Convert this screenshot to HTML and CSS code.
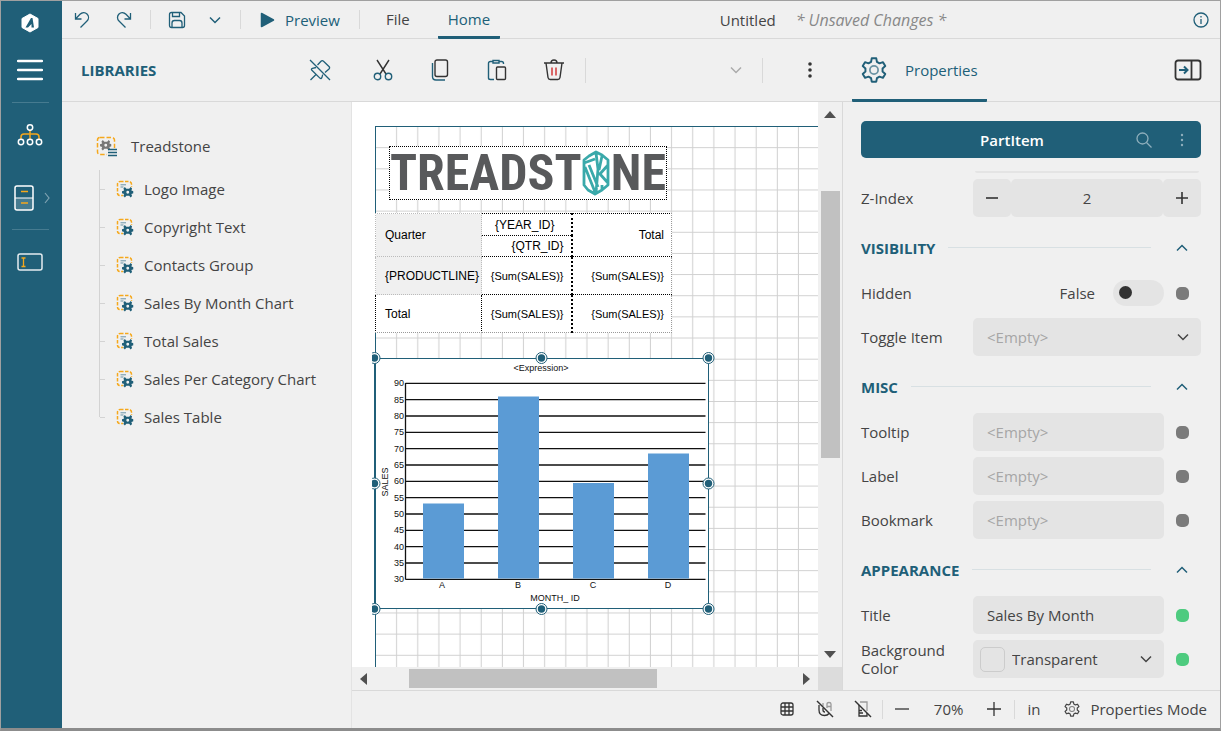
FILE: index.html
```html
<!DOCTYPE html>
<html lang="en">
<head>
    <meta charset="UTF-8">
    <meta name="viewport" content="width=device-width, initial-scale=1.0">
    <title>Untitled - Report Designer</title>
    <link rel="stylesheet" href="styles.css">
</head>
<body>
    <!-- Shared icons -->
    <svg class="sprite" width="0" height="0" aria-hidden="true">
        <symbol id="gear" viewBox="0 0 24 24">
            <path d="M9.3 4.5 9.9 1.2h4.2l.6 3.3 2.4 1.4 3.2-1.1 2.1 3.6-2.5 2.2v2.8l2.5 2.2-2.1 3.6-3.2-1.1-2.4 1.4-.6 3.3H9.9l-.6-3.3-2.4-1.4-3.2 1.1-2.1-3.6 2.5-2.2v-2.8L1.6 8.4l2.1-3.6 3.2 1.1z" fill="none" stroke="currentColor" stroke-width="1.8" stroke-linejoin="round"/>
            <circle cx="12" cy="12" r="3.8" fill="none" stroke="currentColor" stroke-width="1.6" opacity=".65"/>
        </symbol>
        <symbol id="cog" viewBox="0 0 24 24">
            <path fill="currentColor" fill-rule="evenodd" d="M9 4.500 6 1 3 4l1.500 4.500L0 10v4l4.500 1.500L3 20l3 3 3-3.500h6l3 3.500 3-3-1.500-4.500L24 14v-4l-4.500-1.500L21 4l-3-3-3 3.500zM12 9a3 3 0 1 0 0 6 3 3 0 0 0 0-6z"/>
        </symbol>
        <symbol id="part" viewBox="0 0 18 18">
            <rect x="1.500" y="1.500" width="14" height="14" rx="2.500" fill="none" stroke="#f5a81c" stroke-width="1.500" stroke-dasharray="3.500 1.500"/>
            <path d="M8 7h10v11H7z" fill="#f0f0f0"/>
            <path d="M4.500 4.800h5.500M4.500 7h3" stroke="#6b93a5"/>
            <use href="#cog" x="6" y="6.500" width="11.500" height="11.500" color="#205f78"/>
        </symbol>
        <symbol id="down" viewBox="0 0 12 12">
            <path d="m1 3.500 5 5 5-5" fill="none" stroke="currentColor" stroke-width="1.500"/>
        </symbol>
        <symbol id="up" viewBox="0 0 12 12">
            <path d="m1 8.500 5-5 5 5" fill="none" stroke="currentColor" stroke-width="1.500"/>
        </symbol>
    </svg>

    <nav class="sidebar">
        <a class="brand" href="#" aria-label="Start">
            <svg width="18" height="20" viewBox="0 0 18 20"><path d="M9 1l8 4.500v9L9 19l-8-4.500v-9z" fill="#fff" stroke="#fff" stroke-linejoin="round"/><path d="M10 5 4.500 14.500H7L10.500 11v3.500H13L11.500 5z" fill="#205f78"/></svg>
        </a>
        <button class="side-btn menu" aria-label="Menu">
            <svg width="26" height="22" viewBox="0 0 26 22"><path d="M1 2h24M1 11h24M1 20h24" stroke="#fff" stroke-width="2.500" stroke-linecap="round"/></svg>
        </button>
        <hr>
        <button class="side-btn" aria-label="Explorer">
            <svg width="26" height="22" viewBox="0 0 26 22" fill="none" stroke-width="1.500"><path d="M13 6v9M4 15v-2q0-3 3-3h12q3 0 3 3v2" stroke="#f5a81c"/><g stroke="#fff"><circle cx="13" cy="3.500" r="2.700"/><circle cx="4" cy="18" r="2.700"/><circle cx="13" cy="18" r="2.700"/><circle cx="22" cy="18" r="2.700"/></g></svg>
        </button>
        <button class="side-btn libs" aria-label="Libraries">
            <svg width="36" height="26" viewBox="0 0 36 26" fill="none"><path d="M1 13h18v12H1z" fill="#467b90"/><rect x="1" y="1" width="18" height="24" rx="2" stroke="#fff" stroke-width="1.500"/><path d="M1 13h18" stroke="#fff"/><path d="M7 6.500h7M7 18h7" stroke="#f5a81c" stroke-width="1.500"/><path d="m31 8 4 5-4 5" stroke="#7fa3b2" stroke-width="1.200"/></svg>
        </button>
        <hr>
        <button class="side-btn" aria-label="Text box">
            <svg width="26" height="18" viewBox="0 0 26 18" fill="none"><rect x="1" y="1" width="24" height="16" rx="2" stroke="#e4ecef" stroke-width="1.500"/><path d="M4.500 5h4M4.500 13.500h4M6.500 5v8.500" stroke="#f5a81c" stroke-width="1.300"/></svg>
        </button>
    </nav>

    <div class="main">
        <header class="topbar">
            <button class="icon-btn undo" aria-label="Undo">
                <svg width="16" height="18" viewBox="0 0 16 18"><path d="M1.500 2v6h6M1.500 8 6 3.300C8 1.400 11 1 13 3s2 5 0 7l-6.500 6.500"/></svg>
            </button>
            <button class="icon-btn redo" aria-label="Redo">
                <svg width="16" height="18" viewBox="0 0 16 18"><path d="M14.500 2v6h-6M14.500 8 10 3.300C8 1.400 5 1 3 3s-2 5 0 7l6.500 6.500"/></svg>
            </button>
            <span class="sep"></span>
            <button class="icon-btn save" aria-label="Save">
                <svg width="18" height="18" viewBox="0 0 18 18"><path d="M1.500 3.500q0-2 2-2H13l3.500 3.500v9.500q0 2-2 2h-11q-2 0-2-2zM4.500 1.500v4h7v-4M4 16.500V12q0-2.500 2.500-2.500h5Q14 9.500 14 12v4.500"/></svg>
            </button>
            <button class="icon-btn more-save" aria-label="Save options">
                <svg width="12" height="12"><use href="#down"/></svg>
            </button>
            <span class="sep"></span>
            <button class="preview">
                <svg width="15" height="16" viewBox="0 0 15 16"><path d="M1.500 1.500v13L13.500 8z" fill="currentColor" stroke="currentColor" stroke-linejoin="round" stroke-width="1.500"/></svg>
                Preview
            </button>
            <span class="sep"></span>
            <button class="tab">File</button>
            <button class="tab active">Home</button>
            <div class="doc-title">Untitled <em>* Unsaved Changes *</em></div>
            <button class="icon-btn info" aria-label="About">
                <svg width="16" height="16" viewBox="0 0 16 16"><circle cx="8" cy="8" r="7"/><path d="M8 7v5M8 4v1.500"/></svg>
            </button>
        </header>

        <div class="workspace">
            <aside class="libraries">
                <div class="lib-head">
                    <h2>LIBRARIES</h2>
                    <button class="icon-btn" aria-label="Unpin">
                        <svg width="22" height="22" viewBox="0 0 22 22"><path d="M1 1l20 20M8.500 6 12 2.200q1.200-1.200 2.500 0l5.500 5.300q1.200 1.200 0 2.500L16 13.500M7 8.500 3.500 9.300q-1.800.7-.6 2l8 7.800q1.300 1.200 2-.5l.8-3M7 15.500 1.500 21"/></svg>
                    </button>
                </div>
                <div class="tree">
                    <div class="root">
                        <svg width="21" height="21" viewBox="0 0 21 21"><rect x="1.500" y="1.500" width="17" height="17" rx="2.500" fill="none" stroke="#f5a81c" stroke-width="1.500" stroke-dasharray="4.500 2"/><path d="M11 12h10v9H11z" fill="#f0f0f0"/><use href="#cog" x="4" y="3.500" width="11.500" height="11.500" color="#777"/><path d="M12 13.500h9M12 16.500h9M12 19.500h9" stroke="#205f78" stroke-width="1.500"/></svg>
                        Treadstone
                    </div>
                    <ul>
                        <li><svg width="18" height="18"><use href="#part"/></svg>Logo Image</li>
                        <li><svg width="18" height="18"><use href="#part"/></svg>Copyright Text</li>
                        <li><svg width="18" height="18"><use href="#part"/></svg>Contacts Group</li>
                        <li><svg width="18" height="18"><use href="#part"/></svg>Sales By Month Chart</li>
                        <li><svg width="18" height="18"><use href="#part"/></svg>Total Sales</li>
                        <li><svg width="18" height="18"><use href="#part"/></svg>Sales Per Category Chart</li>
                        <li><svg width="18" height="18"><use href="#part"/></svg>Sales Table</li>
                    </ul>
                </div>
            </aside>

            <div class="designer">
                <div class="columns">
                    <section class="editor">
                        <div class="toolbar">
                            <button class="tool" aria-label="Cut">
                                <svg width="20" height="22" viewBox="0 0 20 22"><path d="M4 1l9 14M16 1 7 15"/><g stroke="#205f78"><circle cx="4.500" cy="17.500" r="3.200"/><circle cx="15.500" cy="17.500" r="3.200"/></g></svg>
                            </button>
                            <button class="tool" aria-label="Copy">
                                <svg width="18" height="22" viewBox="0 0 18 22"><rect x="4" y="1" width="12.500" height="16.500" rx="2"/><path d="M1.500 4v13.500q0 3.500 3.500 3.500h9" stroke="#205f78"/></svg>
                            </button>
                            <button class="tool" aria-label="Paste">
                                <svg width="20" height="22" viewBox="0 0 20 22"><path d="M6 2.500H3.500q-2 0-2 2V19q0 1.500 2 1.500H7M12 2.500h2.500q2 0 2 2V5M6 1.500h6v2.500H6z" stroke="#205f78"/><rect x="9.500" y="8" width="9" height="12.500" rx="1"/></svg>
                            </button>
                            <button class="tool" aria-label="Delete">
                                <svg width="22" height="22" viewBox="0 0 22 22"><path d="M1 4h20M3 4l2 14.500q.3 2 2.300 2h7.400q2 0 2.300-2L19 4M8 4q0-3 3-3t3 3"/><path d="M9 8.500v8M13 8.500v8" stroke="#d96666" stroke-width="2"/></svg>
                            </button>
                            <span class="sep"></span>
                            <div class="select-wrap style-select">
                                <select aria-label="Style"><option></option></select>
                                <svg width="12" height="12"><use href="#down"/></svg>
                            </div>
                            <span class="sep"></span>
                            <button class="tool overflow" aria-label="More">
                                <svg width="4" height="16" viewBox="0 0 4 16"><g fill="#333" stroke="none"><circle cx="2" cy="2" r="1.800"/><circle cx="2" cy="8" r="1.800"/><circle cx="2" cy="14" r="1.800"/></g></svg>
                            </button>
                        </div>

                        <div class="viewport">
                            <div class="canvas">
                                <div class="page">
                                    <svg class="page-grid" width="100%" height="100%">
                                        <defs><pattern id="cell" width="21.150" height="21.150" patternUnits="userSpaceOnUse"><path d="M20.600 0v21.150M0 20.600h21.150" stroke="#d0d0d0" stroke-width="1" fill="none"/></pattern></defs>
                                        <rect width="100%" height="100%" fill="url(#cell)"/>
                                    </svg>
                                </div>

                                <div class="logo-item">
                                    <span>TREADST</span>
                                    <svg width="28" height="46" viewBox="0 0 28 46" fill="none" stroke="#3aa9aa" stroke-width="2.800" stroke-linejoin="round"><path d="M14 2 20 5l6 5v25l-6 5-7 4-7-4-4-5V10l5-4zM2 13l11-4M14 3l2 16-2 24M3 17l10 25M7 15l9 22M17 25l9-10M17 20l3-14M18 24l8 9M20 35v5"/></svg>
                                    <span>NE</span>
                                </div>

                                <table class="tablix">
                                    <tr><td class="head" rowspan="2">Quarter</td><td class="mid">{YEAR_ID}</td><td class="num edge" rowspan="2">Total</td></tr>
                                    <tr><td class="num">{QTR_ID}</td></tr>
                                    <tr class="tall"><td class="head">{PRODUCTLINE}</td><td class="sum">{Sum(SALES)}</td><td class="sum edge">{Sum(SALES)}</td></tr>
                                    <tr class="tall"><td>Total</td><td class="sum">{Sum(SALES)}</td><td class="sum edge">{Sum(SALES)}</td></tr>
                                </table>

                                <svg class="chart-item" width="343" height="265" viewBox="0 0 343 265">
                                    <rect x="3" y="7" width="334" height="251" fill="#fff"/>
                                    <g stroke="#111" stroke-width="1.300">
                                        <path d="M33.500 32.300h300M33.500 48.600h300M33.500 65h300M33.500 81.300h300M33.500 97.600h300M33.500 114h300M33.500 130.300h300M33.500 146.600h300M33.500 163h300M33.500 179.300h300M33.500 195.600h300M33.500 212h300M33.500 228.300h300M33.500 32v196.500"/>
                                    </g>
                                    <g fill="#5b9bd5">
                                        <rect x="51" y="152.500" width="41" height="75"/>
                                        <rect x="126" y="45.500" width="41" height="182"/>
                                        <rect x="201" y="132" width="41" height="95.500"/>
                                        <rect x="276" y="102.500" width="41" height="125"/>
                                    </g>
                                    <g class="axis-y">
                                        <text x="32" y="35">90</text><text x="32" y="52">85</text><text x="32" y="68">80</text><text x="32" y="84">75</text><text x="32" y="101">70</text><text x="32" y="117">65</text><text x="32" y="133">60</text><text x="32" y="150">55</text><text x="32" y="166">50</text><text x="32" y="182">45</text><text x="32" y="199">40</text><text x="32" y="215">35</text><text x="32" y="231">30</text>
                                    </g>
                                    <g class="axis-x">
                                        <text x="70" y="237">A</text><text x="146" y="237">B</text><text x="221" y="237">C</text><text x="296" y="237">D</text>
                                        <text x="183" y="250">MONTH_ ID</text>
                                        <text x="169" y="20">&lt;Expression&gt;</text>
                                        <text transform="translate(16 131) rotate(-90)">SALES</text>
                                    </g>
                                    <rect x="3.500" y="7.500" width="333" height="250" fill="none" stroke="#205f78"/>
                                    <path d="M3 7v251" stroke="#205f78" stroke-width="2"/>
                                    <g class="handle-ring">
                                        <circle cx="2.500" cy="7" r="5.500"/><circle cx="169.500" cy="7" r="5.500"/><circle cx="336.500" cy="7" r="5.500"/>
                                        <circle cx="2.500" cy="132.500" r="5.500"/><circle cx="336.500" cy="132.500" r="5.500"/>
                                        <circle cx="2.500" cy="258" r="5.500"/><circle cx="169.500" cy="258" r="5.500"/><circle cx="336.500" cy="258" r="5.500"/>
                                    </g>
                                    <g fill="#205f78">
                                        <circle cx="2.500" cy="7" r="3.700"/><circle cx="169.500" cy="7" r="3.700"/><circle cx="336.500" cy="7" r="3.700"/>
                                        <circle cx="2.500" cy="132.500" r="3.700"/><circle cx="336.500" cy="132.500" r="3.700"/>
                                        <circle cx="2.500" cy="258" r="3.700"/><circle cx="169.500" cy="258" r="3.700"/><circle cx="336.500" cy="258" r="3.700"/>
                                    </g>
                                </svg>
                            </div>
                            <div class="vscroll">
                                <svg width="12" height="7"><path d="M0 7 6 0l6 7z" fill="#505050"/></svg>
                                <div class="vtrack"><div class="vthumb"></div></div>
                                <svg width="12" height="7"><path d="M0 0l6 7 6-7z" fill="#505050"/></svg>
                            </div>
                            <div class="hscroll">
                                <svg width="7" height="12"><path d="M7 0 0 6l7 6z" fill="#505050"/></svg>
                                <div class="htrack"><div class="hthumb"></div></div>
                                <svg width="7" height="12"><path d="M0 0l7 6-7 6z" fill="#505050"/></svg>
                            </div>
                            <div class="corner"></div>
                        </div>
                    </section>

                    <aside class="properties">
                        <div class="prop-head">
                            <button class="prop-tab">
                                <svg width="26" height="26"><use href="#gear"/></svg>
                                Properties
                            </button>
                            <button class="icon-btn" aria-label="Collapse panel">
                                <svg width="28" height="22" viewBox="0 0 28 22"><g stroke="#333" stroke-width="1.800"><rect x="1.500" y="1.500" width="25" height="19" rx="2.500"/><path d="M17.500 1.500v19"/></g><path d="M5 11h8.500M10 7.500l3.500 3.500-3.500 3.500" stroke-width="2"/></svg>
                            </button>
                        </div>
                        <div class="prop-body">
                            <div class="item-bar">
                                <strong>PartItem</strong>
                                <button class="icon-btn" aria-label="Search"><svg width="18" height="18" viewBox="0 0 18 18"><circle cx="7.500" cy="7.500" r="5.500"/><path d="m11.500 11.500 5 5"/></svg></button>
                                <button class="icon-btn" aria-label="Options"><svg width="4" height="14" viewBox="0 0 4 14"><g fill="currentColor" stroke="none"><circle cx="2" cy="2" r="1.200"/><circle cx="2" cy="7" r="1.200"/><circle cx="2" cy="12" r="1.200"/></g></svg></button>
                            </div>
                            <div class="clipped-field"></div>

                            <div class="row">
                                <label for="zindex">Z-Index</label>
                                <div class="stepper">
                                    <button aria-label="Decrease"><svg width="14" height="14" viewBox="0 0 14 14"><path d="M1 7h12"/></svg></button>
                                    <input id="zindex" type="text" value="2">
                                    <button aria-label="Increase"><svg width="14" height="14" viewBox="0 0 14 14"><path d="M1 7h12M7 1v12"/></svg></button>
                                </div>
                            </div>

                            <div class="group"><h3>VISIBILITY</h3><span></span><button aria-label="Collapse visibility"><svg width="12" height="12"><use href="#up"/></svg></button></div>
                            <div class="row">
                                <label for="hidden">Hidden</label>
                                <div class="toggle"><span>False</span><input id="hidden" type="checkbox"></div>
                                <i class="mark"></i>
                            </div>
                            <div class="row">
                                <label for="toggle">Toggle Item</label>
                                <div class="select-wrap wide">
                                    <select id="toggle" class="field empty"><option>&lt;Empty&gt;</option></select>
                                    <svg width="12" height="12"><use href="#down"/></svg>
                                </div>
                            </div>

                            <div class="group"><h3>MISC</h3><span></span><button aria-label="Collapse misc"><svg width="12" height="12"><use href="#up"/></svg></button></div>
                            <div class="row"><label for="tooltip">Tooltip</label><input id="tooltip" class="field" type="text" placeholder="&lt;Empty&gt;"><i class="mark"></i></div>
                            <div class="row"><label for="label">Label</label><input id="label" class="field" type="text" placeholder="&lt;Empty&gt;"><i class="mark"></i></div>
                            <div class="row"><label for="bookmark">Bookmark</label><input id="bookmark" class="field" type="text" placeholder="&lt;Empty&gt;"><i class="mark"></i></div>

                            <div class="group"><h3>APPEARANCE</h3><span></span><button aria-label="Collapse appearance"><svg width="12" height="12"><use href="#up"/></svg></button></div>
                            <div class="row"><label for="title">Title</label><input id="title" class="field" type="text" value="Sales By Month"><i class="mark set"></i></div>
                            <div class="row">
                                <label for="bgcolor">Background Color</label>
                                <div class="select-wrap color">
                                    <span class="swatch"></span>
                                    <select id="bgcolor"><option>Transparent</option></select>
                                    <svg width="12" height="12"><use href="#down"/></svg>
                                </div>
                                <i class="mark set"></i>
                            </div>
                        </div>
                    </aside>
                </div>

                <footer class="statusbar">
                    <button class="status-btn" aria-label="Grid"><svg width="14" height="14" viewBox="0 0 14 14"><rect x="1" y="1" width="12" height="12" rx="2"/><path d="M5 1v12M9 1v12M1 5h12M1 9h12"/></svg></button>
                    <button class="status-btn" aria-label="Snap to grid"><svg width="18" height="18" viewBox="0 0 18 18"><path d="M3 5v5q0 5.500 5.500 5.500 3 0 4.500-2M7 8v2q0 2 2 2"/><path d="M7 3v3M11 8V4q0-1.500 2-1.500T15 4v7M11 6.500h4" opacity=".45"/><path d="M1 1l16 16" stroke-width="1.500"/></svg></button>
                    <button class="status-btn" aria-label="Rulers"><svg width="18" height="18" viewBox="0 0 18 18"><path d="M5 5v11h8v-3M8 10.500H5M9 13H5"/><path d="M6 2h7v9" opacity=".45"/><path d="M1 1l16 16" stroke-width="1.500"/></svg></button>
                    <span class="sep"></span>
                    <button class="status-btn" aria-label="Zoom out"><svg width="14" height="14" viewBox="0 0 14 14"><path d="M0 7h14"/></svg></button>
                    <span class="zoom">70%</span>
                    <button class="status-btn zoom-in" aria-label="Zoom in"><svg width="14" height="14" viewBox="0 0 14 14"><path d="M0 7h14M7 0v14"/></svg></button>
                    <span class="sep"></span>
                    <button class="units">in</button>
                    <button class="mode"><svg width="16" height="16"><use href="#gear"/></svg>Properties Mode</button>
                </footer>
            </div>
        </div>
    </div>
</body>
</html>
```
FILE: styles.css
```css
* {
    margin: 0;
    padding: 0;
    box-sizing: border-box;
}

body {
    display: flex;
    height: 100vh;
    overflow: hidden;
    border: 1px solid #a0a0a0;
    border-bottom: 3px solid #8c8c8c;
    background: #f0f0f0;
    color: #444;
    font: 15px/18px "Open Sans", sans-serif;
}

button, input, select {
    border: none;
    background: none;
    color: inherit;
    font: inherit;
    outline: none;
}

button {
    display: flex;
    align-items: center;
    justify-content: center;
    cursor: pointer;
}

svg {
    display: block;
    flex: none;
}

.sprite {
    position: absolute;
}

/* Sidebar */
.sidebar {
    display: flex;
    flex-direction: column;
    align-items: center;
    width: 61px;
    flex: none;
    padding-right: 3px;
    background: #205f78;
}

.sidebar hr {
    width: 37px;
    border: none;
    border-top: 1px solid #467b90;
}

.brand {
    margin-top: 12px;
}

.side-btn {
    width: 100%;
    height: 64px;
}

.side-btn.menu {
    height: 69px;
    padding-top: 5px;
}

.side-btn.libs {
    height: 62px;
    padding-left: 4px;
}

/* Top bar */
.main {
    display: flex;
    flex-direction: column;
    flex: 1;
    min-width: 0;
}

.topbar {
    display: flex;
    align-items: center;
    height: 38px;
    flex: none;
    padding-right: 6px;
    border-bottom: 1px solid #d9d9d9;
}

.icon-btn {
    height: 36px;
    color: #205f78;
}

.icon-btn svg {
    fill: none;
    stroke: currentColor;
    stroke-width: 1.3;
}

.undo {
    width: 40px;
}

.redo {
    width: 44px;
    margin-right: 4px;
}

.sep {
    width: 1px;
    height: 19px;
    flex: none;
    background: #d9d9d9;
}

.save {
    width: 52px;
}

.more-save {
    width: 24px;
    margin-right: 13px;
}

.preview {
    gap: 10px;
    height: 100%;
    padding: 0 19px;
    color: #205f78;
}

.tab {
    height: 38px;
    border-bottom: 3px solid transparent;
    border-radius: 1px;
    padding: 2px 10px 0;
    margin-left: 16px;
    margin-right: 2px;
}

.tab.active {
    border-color: #205f78;
    color: #205f78;
}

.doc-title {
    margin: 0 auto;
    padding-right: 24px;
}

.doc-title em {
    margin-left: 16px;
    color: #888;
    font-size: 16px;
}

.info {
    width: 26px;
}

.workspace {
    display: flex;
    flex: 1;
    min-height: 0;
}

/* Libraries */
.libraries {
    width: 290px;
    flex: none;
}

.lib-head {
    display: flex;
    align-items: center;
    justify-content: space-between;
    height: 63px;
    padding: 0 21px 0 19px;
    border-bottom: 1px solid #d9d9d9;
}

h2, h3 {
    color: #205f78;
    font-size: 15px;
    font-weight: 700;
}

.tree {
    height: calc(100% - 63px);
    padding: 25px 0 0 34px;
    border-right: 1px solid #e3e3e3;
}

.root {
    display: flex;
    align-items: center;
    gap: 14px;
    height: 38px;
}

.tree ul {
    margin: 5px 0 0 3px;
    list-style: none;
}

.tree li {
    display: flex;
    align-items: center;
    gap: 10px;
    height: 38px;
    padding-left: 12px;
    border-left: 1px solid #d3d3d3;
}

.tree li::before {
    content: "";
    width: 5px;
    height: 1px;
    margin: 0 -6px 0 -12px;
    background: #d3d3d3;
}

.tree li svg {
    margin-left: 7px;
}

.tree li:last-child {
    border-image: linear-gradient(#d3d3d3 50%, transparent 50%) 1;
}

/* Designer */
.designer, .editor {
    display: flex;
    flex-direction: column;
    flex: 1;
    min-width: 0;
    min-height: 0;
}

.columns {
    display: flex;
    flex: 1;
    min-height: 0;
}

.toolbar {
    display: flex;
    align-items: center;
    height: 63px;
    flex: none;
    padding-left: 2px;
    border-bottom: 1px solid #d9d9d9;
}

.toolbar .sep {
    height: 25px;
    margin-left: 3px;
}

.tool {
    width: 57px;
    height: 40px;
}

.tool svg {
    fill: none;
    stroke: #333;
    stroke-width: 1.4;
}

.tool.overflow {
    width: 40px;
    margin: 0 12px 0 27px;
}

.select-wrap {
    position: relative;
    display: flex;
    align-items: center;
}

.select-wrap select {
    width: 100%;
    height: 38px;
    appearance: none;
}

.select-wrap > svg {
    position: absolute;
    right: 12px;
    pointer-events: none;
}

.style-select {
    flex: 1;
    color: #aaa;
}

.style-select > svg {
    right: 17px;
}

.viewport {
    display: grid;
    grid-template: minmax(0, 1fr) 23px / minmax(0, 1fr) 24px;
    flex: 1;
    min-height: 0;
}

.canvas {
    position: relative;
    overflow: hidden;
    background: #fff;
}

.page {
    height: 100%;
    padding: 24px 0 0 23px;
}

.page-grid {
    border-top: 1px solid #205f78;
    border-left: 1px solid #205f78;
}

/* Report items, placed freely on the page */
.logo-item {
    position: absolute;
    left: 37px;
    top: 44px;
    display: flex;
    align-items: center;
    justify-content: space-between;
    width: 278px;
    height: 54px;
    border: 1px dotted #000;
    background: #fff;
    color: #58595b;
    font: bold 50px/52px "Liberation Sans Narrow", "Roboto Condensed", "Liberation Sans", sans-serif;
}

.tablix {
    position: absolute;
    left: 23px;
    top: 111px;
    width: 297px;
    border-collapse: collapse;
    table-layout: fixed;
    background: #fff;
    color: #000;
    font: 12px/14px "Liberation Sans", Arial, sans-serif;
}

.tablix td {
    height: 21px;
    padding: 0 7px 0 9px;
    border: 1px dotted #000;
    white-space: nowrap;
}

.tablix td:first-child {
    width: 106px;
}

.tablix .mid {
    width: 90px;
    height: 22px;
    padding-left: 4px;
    text-align: center;
}

.tablix .tall td {
    height: 38px;
}

.tablix .head {
    border-color: #bbb;
    background: #f0f0f0;
}

.tablix .num {
    text-align: right;
}

.tablix .sum {
    padding-left: 0;
    font-size: 11px;
    text-align: right;
}

.tablix .edge {
    border-left-width: 2px;
    border-right-color: #999;
}

.tablix tr:last-child td {
    border-bottom-color: #999;
}

.chart-item {
    position: absolute;
    left: 20px;
    top: 249px;
    overflow: hidden;
    fill: #111;
    font: 9px "Liberation Sans", Arial, sans-serif;
}

.axis-y {
    text-anchor: end;
}

.axis-x {
    text-anchor: middle;
}

.handle-ring {
    fill: #fff;
    stroke: #205f78;
}

/* Scrollbars */
.vscroll, .hscroll {
    display: flex;
    align-items: center;
    justify-content: space-between;
}

.vscroll {
    flex-direction: column;
    padding: 9px 0;
}

.hscroll {
    padding: 0 8px;
}

.vtrack {
    flex: 1;
    width: 19px;
    padding: 73px 0 0;
}

.vthumb {
    height: 58%;
    background: #c1c1c1;
}

.htrack {
    flex: 1;
    padding-left: 42px;
}

.hthumb {
    width: 63%;
    height: 19px;
    background: #c1c1c1;
}

.corner {
    background: #dcdcdc;
}

/* Properties */
.properties {
    width: 378px;
    flex: none;
    border-left: 1px solid #d9d9d9;
}

.prop-head {
    display: flex;
    align-items: center;
    justify-content: space-between;
    height: 63px;
    margin-left: -1px;
    padding: 0 18px 0 10px;
    border-bottom: 1px solid #d9d9d9;
    background: #f0f0f0;
}

.prop-tab {
    gap: 18px;
    height: 63px;
    padding: 3px 9px 0;
    border-bottom: 3px solid #205f78;
    border-radius: 1px;
    color: #205f78;
}

.prop-body {
    padding: 19px 19px 0 18px;
}

.item-bar {
    display: grid;
    grid-template-columns: 1fr 38px 38px;
    align-items: center;
    height: 37px;
    border-radius: 5px;
    background: #205f78;
    color: #fff;
    text-align: center;
}

.item-bar strong {
    padding-left: 38px;
    font-weight: 600;
}

.item-bar .icon-btn {
    color: #8fafbc;
}

.clipped-field {
    height: 2px;
    margin: 13px 2px 6px 114px;
    border-radius: 0 0 5px 5px;
    background: #e4e4e4;
}

.row {
    display: grid;
    grid-template-columns: 112px minmax(0, 1fr) 37px;
    align-items: center;
    min-height: 38px;
}

.row + .row {
    margin-top: 6px;
}

.field, .stepper > *, .color {
    height: 38px;
    border-radius: 5px;
    background: #e4e4e4;
}

.field {
    width: 100%;
    padding: 0 14px;
}

.field::placeholder, .field.empty {
    color: #a6a6a6;
    opacity: 1;
}

.stepper, .wide {
    grid-column: 2 / 4;
}

.stepper {
    display: grid;
    grid-template-columns: 38px minmax(0, 1fr) 38px;
}

.stepper input {
    width: 100%;
    text-align: center;
}

.stepper svg {
    stroke: #333;
    stroke-width: 1.6;
}

.group {
    display: flex;
    align-items: center;
    height: 57px;
    padding-top: 4px;
    color: #205f78;
}

.group span {
    flex: 1;
    height: 1px;
    margin: 0 25px 0 13px;
    background: #d8e0e3;
}

.group button {
    width: 12px;
    margin-right: 13px;
}

.toggle {
    display: flex;
    align-items: center;
    justify-content: flex-end;
    gap: 18px;
}

.toggle input {
    width: 51px;
    height: 26px;
    padding: 6px;
    border-radius: 13px;
    background: #e4e4e4;
    appearance: none;
}

.toggle input::before {
    content: "";
    display: block;
    width: 13px;
    height: 13px;
    border-radius: 50%;
    background: #333;
}

.mark {
    width: 13px;
    height: 13px;
    margin-left: 12px;
    border-radius: 5px;
    background: #7b7b7b;
}

.mark.set {
    background: #4ecb7f;
}

.color {
    gap: 7px;
    padding-left: 7px;
}

.swatch {
    width: 25px;
    height: 25px;
    flex: none;
    border: 1px solid #ccc;
    border-radius: 5px;
}

/* Status bar */
.statusbar {
    display: flex;
    align-items: center;
    justify-content: flex-end;
    height: 38px;
    flex: none;
    padding: 0 13px 1px 0;
    border-top: 1px solid #d9d9d9;
}

.status-btn {
    width: 38px;
    height: 36px;
}

.status-btn svg {
    fill: none;
    stroke: #333;
    stroke-width: 1.3;
}

.zoom {
    margin: 0 12px 0 13px;
}

.zoom-in {
    margin-right: 1px;
}

.units {
    padding: 0 12px;
}

.mode {
    gap: 10px;
    margin-left: 12px;
}
```
